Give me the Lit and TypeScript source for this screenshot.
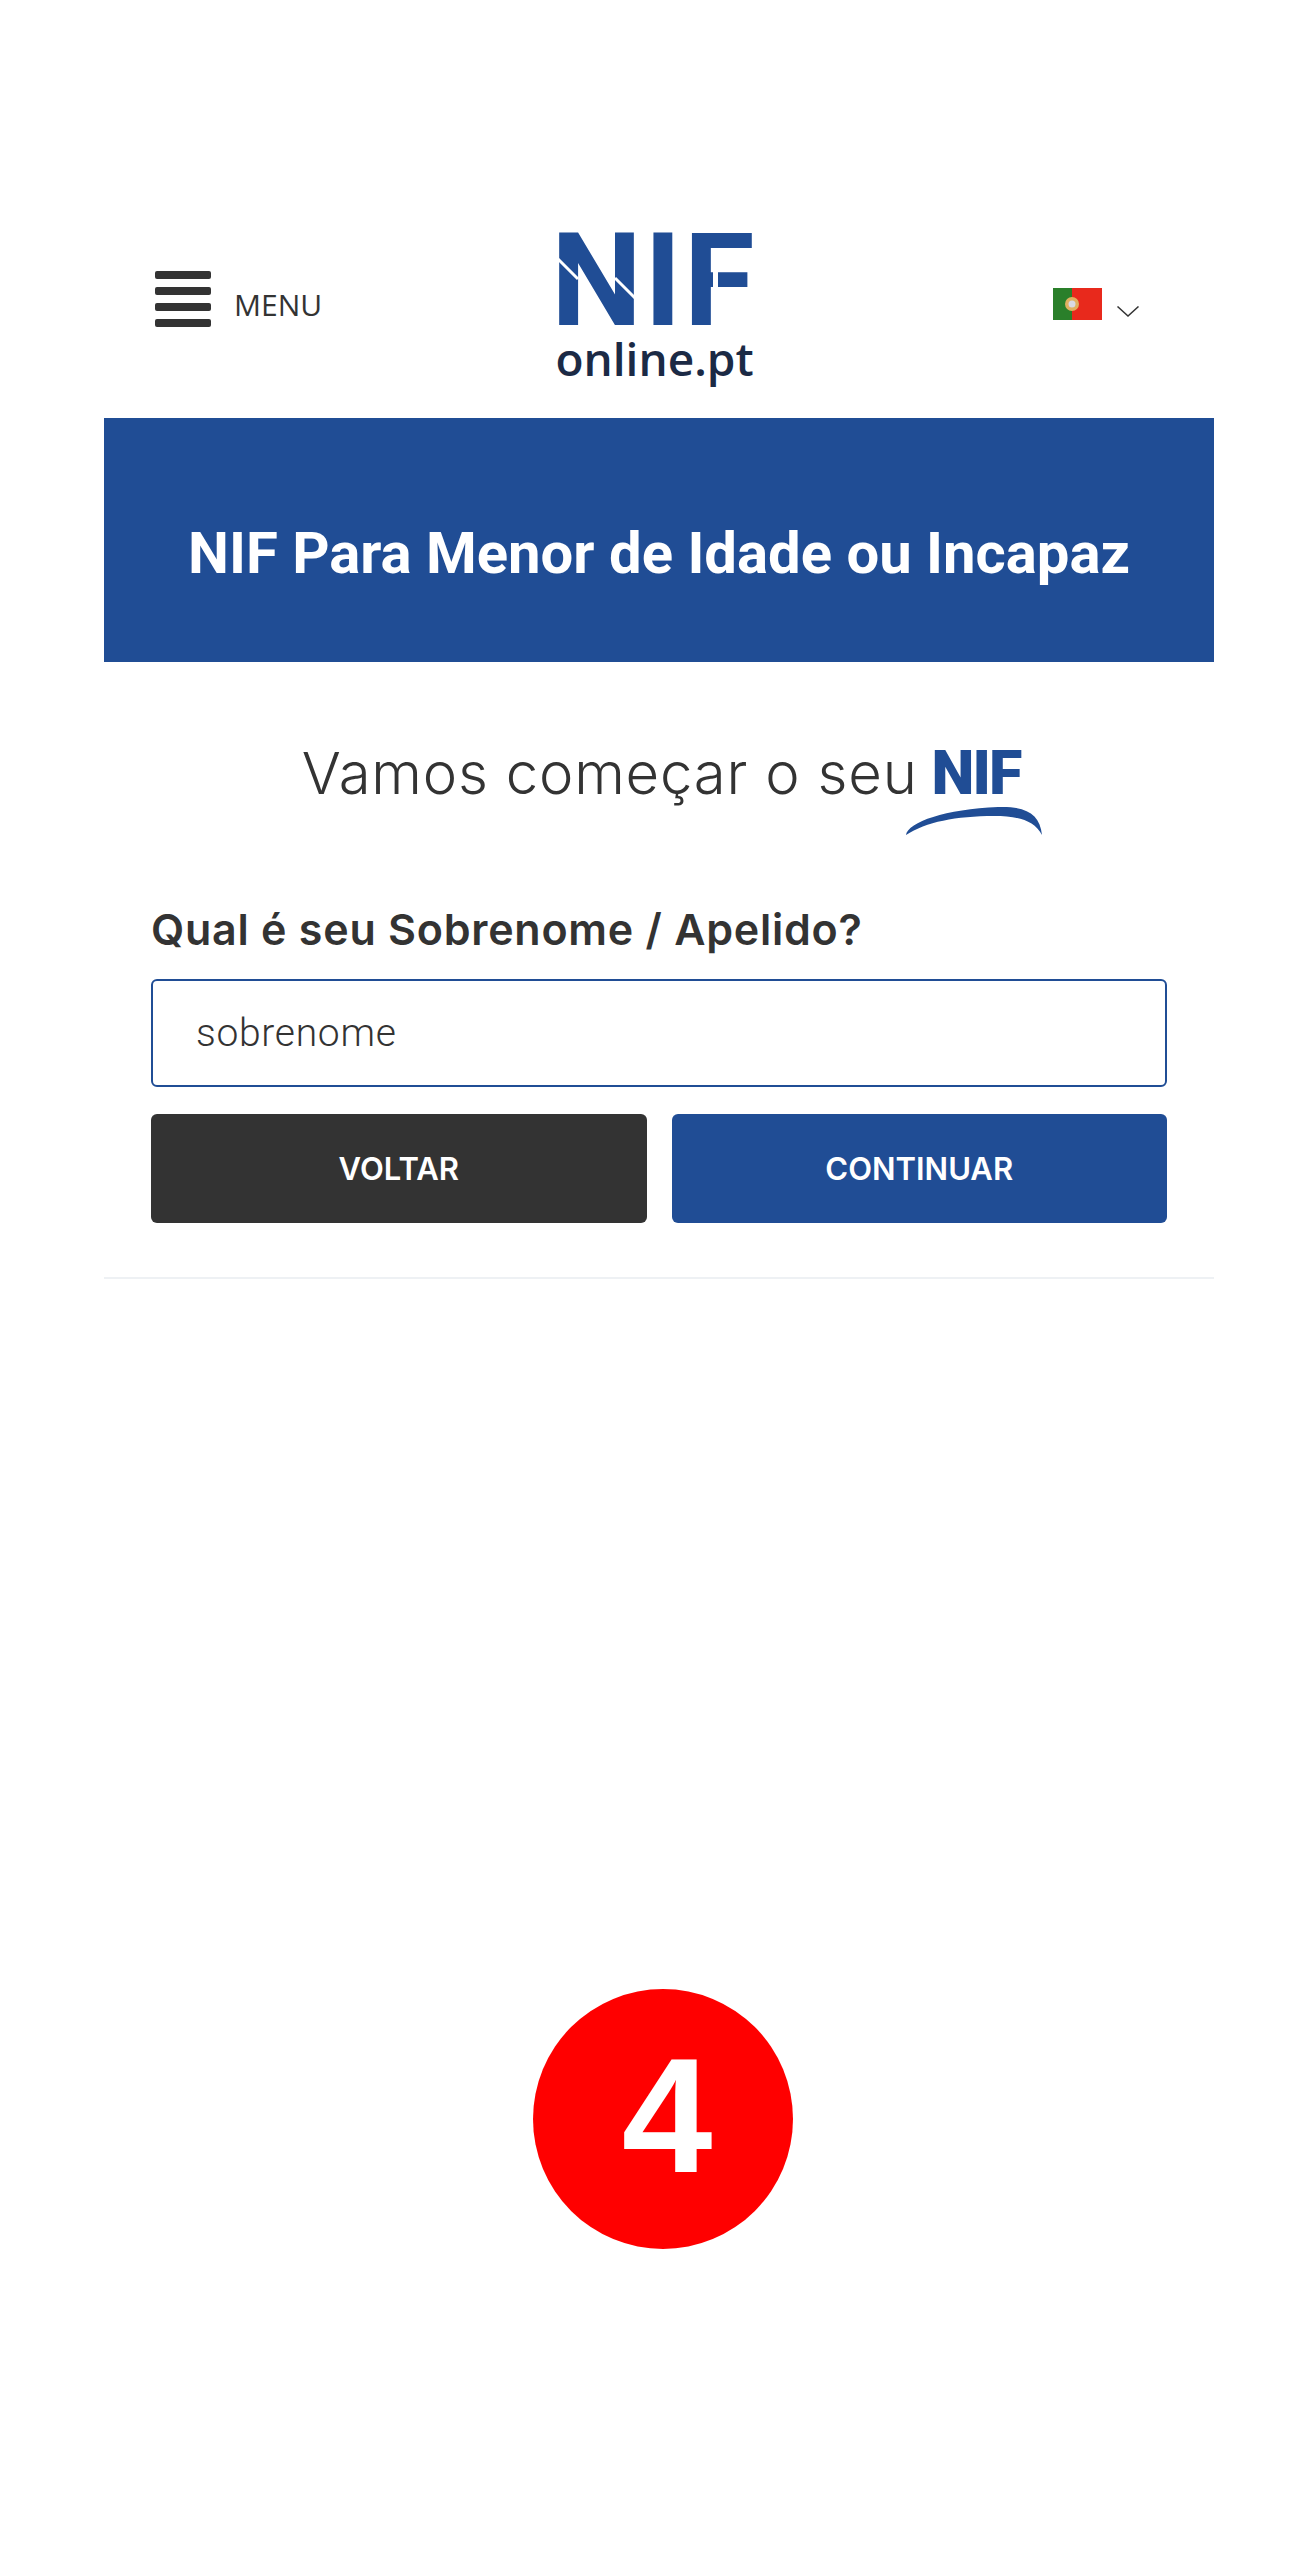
import {LitElement, css, html} from "lit";
import {customElement} from "lit/decorators.js";

@customElement("app-root")
export class AppRoot extends LitElement {
  static override styles = css`
    :host {
      display: block;
      min-height: 2560px;
      background: #fff;
      color: #333;
      font-family: "Open Sans", sans-serif;
    }

    .page {
      width: 1110px;
      margin-left: 104px;
    }

    /* header */
    .header {
      display: grid;
      grid-template-columns: 446.5px 502.5px auto;
      align-items: start;
      height: 418px;
      padding-top: 232px;
      box-sizing: border-box;
    }

    .menu {
      display: flex;
      align-items: flex-start;
      gap: 23px;
      padding-left: 51px;
      margin-top: 39px;
    }

    .burger {
      display: flex;
      flex-direction: column;
      gap: 8px;
      width: 56px;
    }

    .burger span {
      height: 8px;
      border-radius: 2px;
      background: #333;
    }

    .menu-label {
      font-size: 30px;
      line-height: 40px;
      margin-top: 14px;
    }

    .logo {
      width: 208px;
    }

    .logo-mark {
      display: block;
      overflow: visible;
    }

    .logo-mark text {
      font-family: "Roboto", sans-serif;
      font-weight: 700;
      font-size: 129px;
      letter-spacing: 2px;
      fill: #204d95;
    }

    .logo-sub {
      font-weight: 600;
      font-size: 46px;
      line-height: 50px;
      margin-top: 3px;
      padding-left: 5px;
      color: #1b2a45;
    }

    .lang {
      display: flex;
      align-items: flex-start;
      gap: 15px;
      margin-top: 56px;
    }

    .flag {
      display: block;
    }

    .chevron {
      margin-top: 18px;
    }

    /* banner */
    .banner {
      height: 244px;
      box-sizing: border-box;
      padding-top: 26px;
      display: flex;
      align-items: center;
      justify-content: center;
      background: #204d95;
    }

    .banner h1 {
      margin: 0;
      font-family: "Roboto", sans-serif;
      font-weight: 700;
      font-size: 58px;
      line-height: 64px;
      color: #fff;
    }

    /* intro */
    .intro {
      display: flex;
      justify-content: center;
      align-items: baseline;
      gap: 14px;
      margin-top: 72px;
      height: 86px;
      margin-left: 4px;
    }

    .intro-text {
      font-family: "Inter", sans-serif;
      font-weight: 300;
      font-size: 58px;
      line-height: 78px;
      letter-spacing: 0.8px;
    }

    .intro-brand {
      position: relative;
      font-family: "Roboto", sans-serif;
      font-weight: 900;
      font-size: 61px;
      line-height: 78px;
      letter-spacing: -2px;
      color: #204d95;
    }

    .swoosh {
      position: absolute;
      left: -26px;
      top: 72px;
    }

    /* form */
    .form {
      padding: 0 47px;
      margin-top: 81px;
    }

    .label {
      margin: 0 0 22px;
      font-family: "Inter", sans-serif;
      font-weight: 600;
      font-size: 43px;
      line-height: 56px;
      letter-spacing: 0.75px;
      color: #333;
    }

    input {
      display: block;
      width: 100%;
      height: 108px;
      box-sizing: border-box;
      padding: 0 43px;
      border: 2px solid #204d95;
      border-radius: 6px;
      background: #fff;
      font-family: "Roboto", sans-serif;
      font-weight: 300;
      font-size: 39px;
      letter-spacing: 0.7px;
      color: #333;
      outline: none;
    }

    input::placeholder {
      color: #333;
      opacity: 1;
    }

    .actions {
      display: grid;
      grid-template-columns: 1fr 1fr;
      gap: 25px;
      margin-top: 27px;
    }

    button {
      height: 109px;
      border: none;
      border-radius: 6px;
      font-family: "Inter", sans-serif;
      font-weight: 600;
      font-size: 31px;
      color: #fff;
      padding: 0;
    }

    .back {
      background: #333;
    }

    .next {
      background: #204d95;
    }

    .divider {
      height: 2px;
      margin-top: 54px;
      background: #eef1f4;
    }

    /* step marker */
    .step-row {
      display: flex;
      margin-top: 710px;
      padding-left: 429px;
    }

    .step {
      width: 260px;
      height: 260px;
      box-sizing: border-box;
      padding: 0 0 8px 8px;
      border-radius: 50%;
      background: #f00;
      color: #fff;
      display: flex;
      align-items: center;
      justify-content: center;
      font-family: "Liberation Sans", sans-serif;
      font-weight: 700;
      font-size: 163px;
      line-height: 1;
    }
  `;

  override render() {
    return html`
      <div class="page">
        <header class="header">
          <div class="menu">
            <div class="burger"><span></span><span></span><span></span><span></span></div>
            <span class="menu-label">MENU</span>
          </div>
          <div class="logo">
            <svg class="logo-mark" width="208" height="98" viewBox="0 0 208 98">
              <text x="0" y="93">NIF</text>
              <path d="M6 26L27 47M64 46L86 68" stroke="#fff" stroke-width="3" fill="none" />
              <rect x="162" y="36" width="5" height="26" fill="#fff" />
            </svg>
            <div class="logo-sub">online.pt</div>
          </div>
          <div class="lang">
            <svg class="flag" width="49" height="32" viewBox="0 0 49 32">
              <rect width="49" height="32" fill="#e8291c" />
              <rect width="19" height="32" fill="#2a7f2a" />
              <circle cx="19" cy="16" r="7" fill="#e0b060" />
              <circle cx="19" cy="16" r="3.5" fill="#d9d9e4" />
            </svg>
            <svg class="chevron" width="22" height="11" viewBox="0 0 22 11">
              <path d="M0.5 0.5L11 10L21.5 0.5" stroke="#333" stroke-width="1.5" fill="none" />
            </svg>
          </div>
        </header>

        <section class="banner">
          <h1>NIF Para Menor de Idade ou Incapaz</h1>
        </section>

        <div class="intro">
          <span class="intro-text">Vamos começar o seu</span>
          <span class="intro-brand">
            NIF
            <svg class="swoosh" width="136" height="30" viewBox="0 0 136 30">
              <path d="M0 29C2 16 40 3 92 1C120 0 134 8 136 29C128 14 112 10 88 10C50 10 20 16 0 29Z" fill="#204d95" />
            </svg>
          </span>
        </div>

        <div class="form">
          <p class="label">Qual é seu Sobrenome / Apelido?</p>
          <input type="text" placeholder="sobrenome" />
          <div class="actions">
            <button class="back">VOLTAR</button>
            <button class="next">CONTINUAR</button>
          </div>
        </div>

        <div class="divider"></div>

        <div class="step-row">
          <div class="step">4</div>
        </div>
      </div>
    `;
  }
}
